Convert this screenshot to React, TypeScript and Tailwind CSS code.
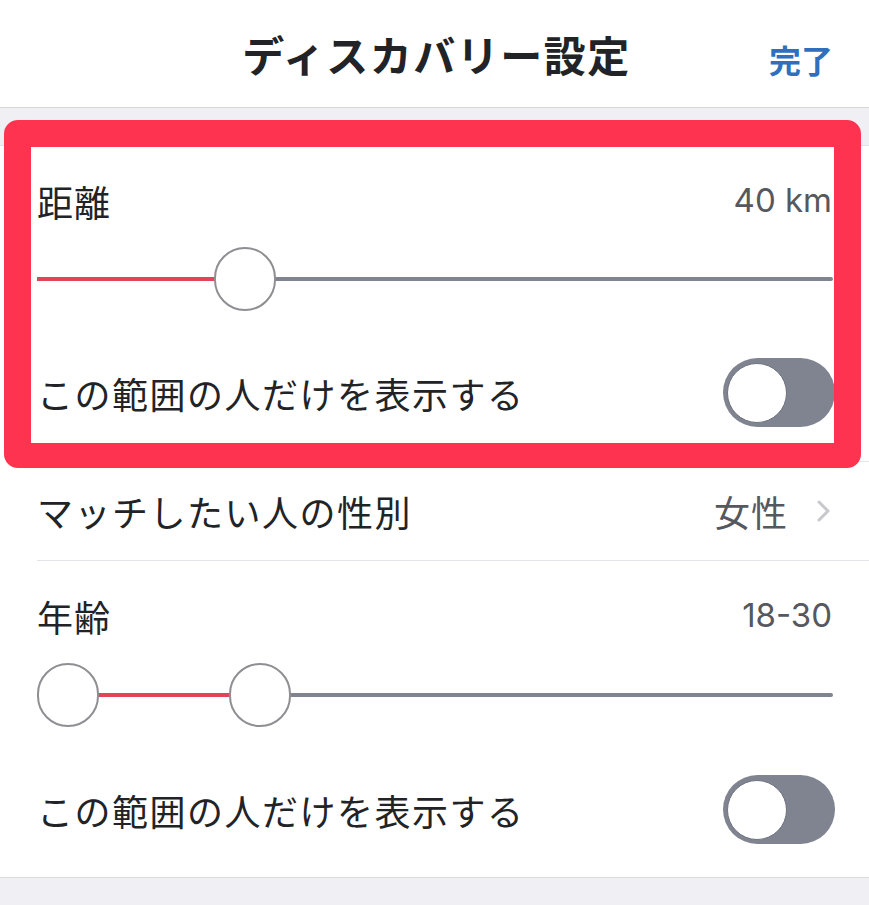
const font = "font-['Noto_Sans_CJK_JP','Noto_Sans',sans-serif]";

interface SliderProps {
    start: number;
    end: number;
    thumbs: number[];
}

const Slider = ({ start, end, thumbs }: SliderProps) => {
    return (
        <div className="relative h-[64px] w-full">
            <div className="absolute left-0 right-0 top-[30px] h-[4px] rounded-full bg-[#7f8490]" />
            <div
                className="absolute top-[30px] h-[4px] bg-[#e0455a]"
                style={{ left: start, width: end - start }}
            />
            {thumbs.map((x) => (
                <div
                    key={x}
                    className="absolute top-0 h-[64px] w-[62px] rounded-full border-2 border-[#8e8e93] bg-white"
                    style={{ left: x }}
                />
            ))}
        </div>
    );
};

const Toggle = () => {
    return (
        <div className="flex h-[69px] w-[112px] items-center rounded-full bg-[#7f8490] pl-[4px]">
            <div className="h-[60px] w-[60px] rounded-full border border-[#6f7380] bg-white" />
        </div>
    );
};

const App = () => {
    return (
        <div className={`relative min-h-[905px] w-full bg-[#efeff4] ${font}`}>
            <header className="relative flex h-[108px] items-center justify-center border-b border-[#d8d8dc] bg-white">
                <h1 className="pl-[4px] text-[42px] font-bold tracking-[1.5px] text-[#222326]">
                    ディスカバリー設定
                </h1>
                <button className="absolute right-[36px] top-[37px] text-[32px] font-bold leading-[44px] text-[#2f6fbe]">
                    完了
                </button>
            </header>
            <div className="h-[38px] border-b border-[#e3e3e8]" />

            <div className="border-b border-[#dcdce0] bg-white text-[#222326]">
                <section className="pl-[37px] pr-[34px] pt-[35px]">
                    <div className="flex h-[40px] items-center justify-between pr-[3px]">
                        <span className="text-[36px] tracking-[1px]">距離</span>
                        <span className="font-['Inter',sans-serif] text-[33px] text-[#55585e]">
                            40 km
                        </span>
                    </div>
                    <div className="mt-[26px] pr-[2px]">
                        <Slider start={0} end={177} thumbs={[177]} />
                    </div>
                    <div className="mt-[47px] flex items-center justify-between pb-[34px]">
                        <span className="text-[36px] tracking-[1.5px]">
                            この範囲の人だけを表示する
                        </span>
                        <Toggle />
                    </div>
                </section>

                <div className="ml-[37px] border-t border-[#e3e3e8]" />
                <div className="flex h-[98px] items-center justify-between pl-[37px] pr-[37px]">
                    <span className="text-[36px] tracking-[1.5px]">
                        マッチしたい人の性別
                    </span>
                    <div className="flex items-center gap-[28px]">
                        <span className="text-[36px] tracking-[1px] text-[#55585e]">
                            女性
                        </span>
                        <svg width="16" height="24" viewBox="0 0 16 24" fill="none">
                            <path
                                d="M3 3l9 9-9 9"
                                stroke="#c7c7cc"
                                strokeWidth="3"
                                strokeLinecap="round"
                                strokeLinejoin="round"
                            />
                        </svg>
                    </div>
                </div>
                <div className="ml-[37px] border-t border-[#e3e3e8]" />

                <section className="pl-[37px] pr-[34px] pt-[35px]">
                    <div className="flex h-[40px] items-center justify-between pr-[3px]">
                        <span className="text-[36px] tracking-[1px]">年齢</span>
                        <span className="font-['Inter',sans-serif] text-[33px] text-[#55585e]">
                            18-30
                        </span>
                    </div>
                    <div className="mt-[27px] pr-[2px]">
                        <Slider start={60} end={192} thumbs={[0, 192]} />
                    </div>
                    <div className="mt-[48px] flex items-center justify-between pb-[33px]">
                        <span className="text-[36px] tracking-[1.5px]">
                            この範囲の人だけを表示する
                        </span>
                        <Toggle />
                    </div>
                </section>
            </div>

            <div className="pointer-events-none absolute left-[4px] top-[120px] h-[348px] w-[857px] rounded-[14px] border-[27px] border-b-[25px] border-[#fe3350]" />
        </div>
    );
};

export default App;
